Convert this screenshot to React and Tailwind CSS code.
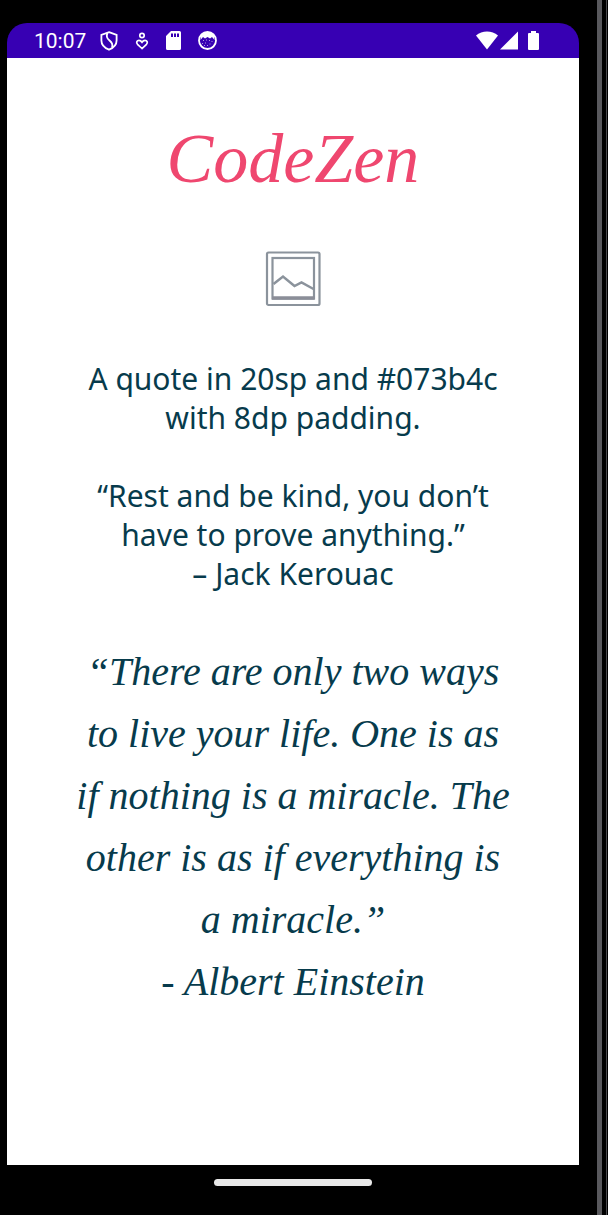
const plainQuotes = [
  ["A quote in 20sp and #073b4c", "with 8dp padding."],
  ["“Rest and be kind, you don’t", "have to prove anything.”", "– Jack Kerouac"],
];

const scriptQuote = [
  "“There are only two ways",
  "to live your life. One is as",
  "if nothing is a miracle. The",
  "other is as if everything is",
  "a miracle.”",
  "- Albert Einstein",
];

function Lines({ lines }) {
  return lines.map((line) => (
    <span key={line} className="block">
      {line}
    </span>
  ));
}

function ShieldIcon() {
  return (
    <svg width="18" height="20" viewBox="0 0 18 20" fill="none" stroke="white" strokeWidth="1.8" aria-hidden="true">
      <path d="M9 1.2 16.6 4v5.500c0 4.200-3 7.400-7.600 9.200C4.400 16.900 1.400 13.700 1.400 9.500V4Z" />
      <path d="M7.500 2C5.800 5.500 7 7.500 9.500 9.500c2.800 2.200 3.600 4 2.500 7" />
    </svg>
  );
}

function HeartPersonIcon() {
  return (
    <svg width="14" height="18" viewBox="0 0 14 18" fill="none" stroke="white" strokeWidth="1.700" aria-hidden="true">
      <circle cx="7" cy="3.500" r="2.200" />
      <path d="M7 16.500 2.500 12.300C.8 10.400 2 8.300 4 8.300c1.400 0 2.300.8 3 1.900.7-1.100 1.600-1.900 3-1.900 2 0 3.200 2.100 1.500 4Z" />
    </svg>
  );
}

function SdCardIcon() {
  return (
    <svg width="15" height="19" viewBox="0 0 15 19" aria-hidden="true">
      <path
        fill="white"
        fillRule="evenodd"
        d="M5 0h8.500A1.500 1.500 0 0 1 15 1.500v16a1.500 1.500 0 0 1-1.500 1.500h-12A1.500 1.500 0 0 1 0 17.500V5Zm0 2.500v3.500h2V2.500Zm3 0v3.500h2V2.500Zm3 0v3.500h2V2.500Z"
      />
    </svg>
  );
}

function CatIcon() {
  return (
    <svg width="19" height="19" viewBox="0 0 19 19" aria-hidden="true">
      <circle cx="9.500" cy="9.500" r="8.500" fill="none" stroke="white" strokeWidth="1.800" />
      <path fill="white" d="M3 4Q9.500-2 16 4L16.500 9 14 6 12 7.500 9.500 6 7 7.500 5 6 2.500 9Z" />
      <path
        fill="white"
        fillOpacity="0.6"
        d="M5 9h1v1H5zM8 8.500h1v1H8zM11 9h1v1h-1zM13.500 10h1v1h-1zM4 12h1v1H4zM7 11.500h1v1H7zM11.500 12.500h1v1h-1zM6 14h1v1H6zM9 14h1v1H9z"
      />
    </svg>
  );
}

function StatusBar() {
  return (
    <header className="flex h-[35px] items-center justify-between rounded-t-[20px] bg-[#3700b3] pr-10 pl-[27px] text-white">
      <div className="flex items-center">
        <time className="font-[Roboto,sans-serif] text-[21px] leading-6">10:07</time>
        <div className="ml-[14px] flex items-center gap-[17px]">
          <ShieldIcon />
          <HeartPersonIcon />
          <SdCardIcon />
          <CatIcon />
        </div>
      </div>
      <div className="flex items-center gap-[2px]">
        <svg width="22" height="19" viewBox="0 0 22 19" fill="white" aria-hidden="true">
          <path d="M0 4.500C6-1 16-1 22 4.500L11 18.500Z" />
        </svg>
        <svg width="18" height="19" viewBox="0 0 18 19" fill="white" aria-hidden="true">
          <path d="M18 .5v18H0Z" />
        </svg>
        <svg className="ml-2" width="11" height="19" viewBox="0 0 11 19" fill="white" aria-hidden="true">
          <path d="M3 0h5v2h2a1 1 0 0 1 1 1v15a1 1 0 0 1-1 1H1a1 1 0 0 1-1-1V3a1 1 0 0 1 1-1h2Z" />
        </svg>
      </div>
    </header>
  );
}

function ImagePlaceholder() {
  return (
    <svg width="56" height="56" viewBox="0 0 56 56" fill="none" role="img" aria-label="Image placeholder">
      <rect x="2" y="1.500" width="52.500" height="52.500" rx="1.500" stroke="#8b939c" strokeWidth="2.200" />
      <rect x="7.500" y="7" width="41.500" height="40.500" stroke="#8b939c" strokeWidth="2.200" />
      <path d="M7 47h42.500" stroke="#8b8e98" strokeWidth="3.500" />
      <path d="m8.500 33 9.500-7.500L29.500 35l7-3.500L48.500 38" stroke="#8b939c" strokeWidth="2.500" />
    </svg>
  );
}

export default function App() {
  return (
    <div className="flex min-h-screen bg-black">
      <div className="flex grow flex-col pt-[23px] pr-[18px] pl-[7px]">
        <StatusBar />
        <main className="flex grow flex-col items-center bg-white px-4 pt-[61px] text-center text-[#073b4c]">
          <h1 className="font-['Liberation_Serif',serif] text-[70px] leading-[80px] text-[#ef476f] italic">CodeZen</h1>
          <div className="mt-[52px]">
            <ImagePlaceholder />
          </div>
          <section className="mt-[52px] flex flex-col gap-[39px] font-['Noto_Sans',sans-serif] text-[30px] leading-[39px]">
            {plainQuotes.map((lines) => (
              <p key={lines[0]}>
                <Lines lines={lines} />
              </p>
            ))}
          </section>
          <p className="mt-[48px] font-['Liberation_Serif',serif] text-[40px] leading-[62px] italic">
            <Lines lines={scriptQuote} />
          </p>
        </main>
        <footer className="flex h-[50px] justify-center pt-[14px]">
          <div className="h-[7px] w-[158px] rounded-full bg-[#e8e8e8]" />
        </footer>
      </div>
      <div className="w-[5px] bg-[#59595d]" />
      <div className="ml-1 w-[2px] border-l border-[#4b4b4e]" />
    </div>
  );
}
